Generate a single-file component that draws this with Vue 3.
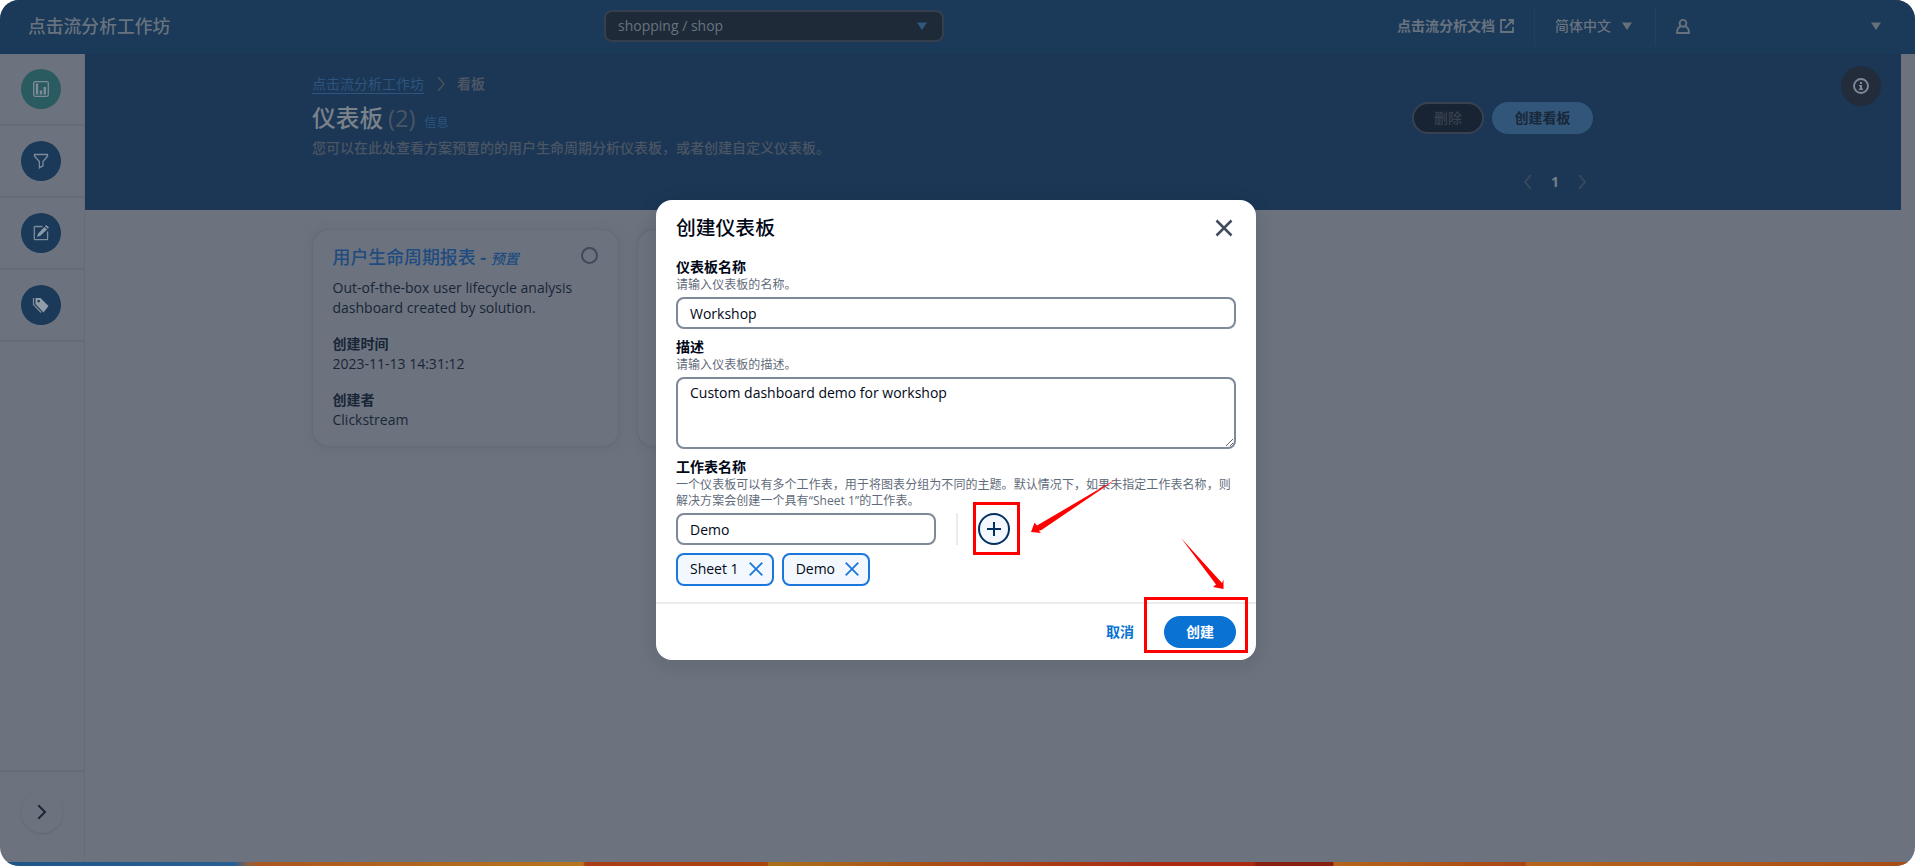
<script setup>
import { ref } from 'vue'
const tags = ['Sheet 1', 'Demo']
const description = ref('Custom dashboard demo for workshop')
</script>

<template>
  <div class="app">
    <header class="topbar">
      <span class="brand">点击流分析工作坊</span>
      <div class="project"><span>shopping / shop</span>
        <svg width="10" height="8" viewBox="0 0 10 8"><path d="M0 .5h10L5 8z" fill="#30587f" stroke="none" /></svg>
      </div>
      <div class="utils">
        <span class="doc">点击流分析文档</span>
        <svg class="ext" width="14" height="14" viewBox="0 0 14 14"><path d="M6 1H1v12h12V8M8.500 1H13v4.500M13 1L5 9" stroke-width="1.800" /></svg>
        <i class="sep s1"></i>
        <span class="lang">简体中文</span>
        <svg class="tri" width="10" height="8" viewBox="0 0 10 8"><path d="M0 .5h10L5 8z" fill="#66717c" stroke="none" /></svg>
        <i class="sep s2"></i>
        <svg class="user" width="14" height="15" viewBox="0 0 14 15"><circle cx="7" cy="4.300" r="3.400" stroke-width="1.900" /><path d="M4.800 7.200C2.500 8.200 1 10 1 14h12c0-4-1.500-5.800-3.800-6.800" stroke-width="1.900" /></svg>
        <svg class="tri last" width="10" height="8" viewBox="0 0 10 8"><path d="M0 .5h10L5 8z" fill="#66717c" stroke="none" /></svg>
      </div>
    </header>

    <div class="body">
      <nav class="side">
        <div class="item"><span class="dot green"><svg width="16" height="16" viewBox="0 0 16 16"><rect x=".7" y=".7" width="14.600" height="14.600" rx="1.500" /><path d="M4 2.500v11M8 9.500v4M11.800 6v7.500" stroke-width="2.400" /></svg></span></div>
        <div class="item"><span class="dot"><svg width="16" height="16" viewBox="0 0 16 16"><path d="M1.500 1.500h13v1.700L10 8.500v4.300l-3.600 2V8.500L1.500 3.200z" /></svg></span></div>
        <div class="item"><span class="dot"><svg width="16" height="16" viewBox="0 0 16 16"><path d="M9.500 1.500H2.200q-.9 0-.9.9v11.400q0 .9.900.9h11.500q.9 0 .9-.9V6.500" /><path d="M13 0l3 2.500-1.200 1.300-2.800-2.500zM11.300 2l2.800 2.600-6.800 6.200-3.300 1.200 1-3.300z" fill="#8c99a6" stroke="none" /></svg></span></div>
        <div class="item"><span class="dot"><svg width="18" height="16" viewBox="0 0 18 16"><path d="M3.500 1h5l8 8-5 6.500-8-8.500zM6.700 2.800a1.300 1.300 0 1 0 .01 0z" fill="#929ca8" fill-rule="evenodd" stroke="none" /><path d="M1.500 1v6.500l7.700 8" /></svg></span></div>
        <div class="expand"><span><svg width="10" height="16" viewBox="0 0 10 16"><path d="M1.300 1.200L8 8l-6.700 6.800" stroke="#1b2737" stroke-width="2" /></svg></span></div>
      </nav>

      <main class="main">
        <section class="hero">
          <div class="heroinner">
            <div class="crumbs"><a>点击流分析工作坊</a>
              <svg width="8" height="14" viewBox="0 0 8 14"><path d="M1 0l6 7-6 7" stroke="#46505e" stroke-width="1.600" /></svg><b>看板</b></div>
            <div class="titlerow">
              <h1>仪表板 <em>(2)</em><small>信息</small></h1>
              <div class="actions"><span class="btn del">删除</span><span class="btn create">创建看板</span></div>
            </div>
            <p>您可以在此处查看方案预置的的用户生命周期分析仪表板，或者创建自定义仪表板。</p>
            <div class="pager">
              <svg width="8" height="14" viewBox="0 0 8 14"><path d="M7 0L1 7l6 7" stroke="#3b4a5c" stroke-width="1.800" /></svg><b>1</b>
              <svg width="8" height="14" viewBox="0 0 8 14"><path d="M1 0l6 7-6 7" stroke="#3b4a5c" stroke-width="1.800" /></svg>
            </div>
          </div>
          <span class="info"><svg width="16" height="16" viewBox="0 0 16 16"><circle cx="8" cy="8" r="7" stroke="#808894" stroke-width="1.900" /><path d="M7 4h2v2H7zM6 7h3v3.500h1V12H6v-1.500h1V8.500H6z" fill="#808894" stroke="none" /></svg></span>
        </section>
        <section class="cards">
          <article class="card">
            <div class="cardhead"><h2>用户生命周期报表 <b>-</b> <i>预置</i></h2><span class="radio"></span></div>
            <p>Out-of-the-box user lifecycle analysis dashboard created by solution.</p>
            <dl><dt>创建时间</dt><dd>2023-11-13 14:31:12</dd></dl>
            <dl><dt>创建者</dt><dd>Clickstream</dd></dl>
          </article>
          <article class="card"></article>
        </section>
      </main>
    </div>
    <div class="strip"></div>

    <div class="modal">
      <div class="mhead"><h3>创建仪表板</h3><svg width="18" height="18" viewBox="0 0 18 18"><path d="M1.500 1.500l15 15M16.500 1.500l-15 15" stroke="#414d5c" stroke-width="2.500" /></svg></div>
      <div class="mbody">
        <label>仪表板名称</label><div class="hint">请输入仪表板的名称。</div>
        <div class="field">Workshop</div>
        <label>描述</label><div class="hint">请输入仪表板的描述。</div>
        <textarea v-model="description" class="field area" spellcheck="false"></textarea>
        <label>工作表名称</label><div class="hint">一个仪表板可以有多个工作表，用于将图表分组为不同的主题。默认情况下，如果未指定工作表名称，则解决方案会创建一个具有“Sheet 1”的工作表。</div>
        <div class="addrow"><div class="field short">Demo</div><i></i>
          <span class="plus"><svg width="14" height="14" viewBox="0 0 14 14"><path d="M7 0v14M0 7h14" stroke="#033160" stroke-width="2" /></svg></span></div>
        <div class="tags"><span v-for="t in tags" :key="t" class="tag">{{ t }}<svg width="14" height="14" viewBox="0 0 14 14"><path d="M.7.7l12.600 12.600M13.300.7L.7 13.300" stroke="#1a77dc" stroke-width="1.800" /></svg></span></div>
      </div>
      <div class="mfoot"><span class="cancel">取消</span><span class="ok">创建</span></div>
    </div>

    <div class="mark m1"></div>
    <div class="mark m2"></div>
    <svg class="arrows" width="220" height="130" viewBox="1020 470 220 130">
      <path d="M1118 478L1041.500 530 1038.800 530.800 1041 533 1031 532 1034.500 522.800 1037 525.500z" fill="#f00" stroke="none" />
      <path d="M1181 538L1222 583 1223.500 579.500 1223.500 589 1213 587 1216 584.500z" fill="#f00" stroke="none" />
    </svg>
  </div>
</template>

<style>
body { margin: 0; background: #fff; overflow: hidden; }
</style>

<style scoped>
* { box-sizing: border-box; }
svg { display: block; fill: none; stroke: #7e8b99; stroke-width: 1.300; flex: none; }
h1, h2, h3, p, dl, dd { margin: 0; }
.app { width: 1915px; height: 866px; display: flex; flex-direction: column; position: relative; overflow: hidden; border-radius: 19px; background: #6c737e; font: 14px/20px "Open Sans", "Noto Sans CJK SC", sans-serif; color: #182638; }
.topbar { height: 54px; flex: none; background: #1b3958; display: flex; align-items: flex-start; color: #68737f; }
.brand { width: 576px; margin-left: 28px; padding-top: 14px; font-size: 17.800px; line-height: 24px; font-weight: 500; }
.project { width: 340px; height: 32px; margin-top: 10px; border: 2px solid #353f4d; border-radius: 8px; background: #1f2a39; padding: 0 15px 0 12px; display: flex; align-items: center; justify-content: space-between; }
.utils { display: flex; align-items: center; margin-left: 453px; height: 54px; padding-bottom: 2px; }
.utils svg { stroke: #66717c; }
.doc { width: 98px; font-weight: 700; white-space: nowrap; }
.ext { margin-left: 5px; }
.sep { width: 1px; height: 39px; background: #24405e; }
.s1 { margin-left: 20px; }
.lang { margin-left: 20px; width: 57px; font-weight: 500; }
.tri { margin-left: 10px; }
.s2 { margin-left: 23px; }
.user { margin-left: 20px; }
.last { margin-left: 181px; }
.body { flex: 1; display: flex; min-height: 0; }
.side { width: 85px; border-right: 1px solid #666d79; display: flex; flex-direction: column; }
.item { height: 72px; border-bottom: 2px solid #666d79; padding: 15px 0 0 21px; flex: none; }
.dot { width: 40px; height: 40px; border-radius: 50%; background: #1b3958; display: flex; align-items: center; justify-content: center; }
.green { background: #2a5b60; }
.expand { margin-top: auto; height: 92px; border-top: 2px solid #666d79; padding: 19px 0 0 21px; }
.expand span { width: 42px; height: 42px; border-radius: 50%; display: flex; align-items: center; justify-content: center; box-shadow: 0 1px 2px #5f6676; }
.main { flex: 1; }
.hero { width: 1816px; height: 156px; background: #1b3755; position: relative; }
.heroinner { margin-left: 227px; width: 1281px; padding-top: 20px; color: #4b5563; }
.crumbs { display: flex; align-items: center; height: 20px; }
.crumbs a { color: #2d5580; border-bottom: 1px solid #2d5580; height: 20px; line-height: 20px; }
.crumbs svg { margin: 0 12px 0 13px; }
.titlerow { display: flex; justify-content: space-between; height: 44px; padding-top: 8px; }
h1 { font-size: 23.700px; line-height: 34px; color: #7a828b; font-weight: 500; display: flex; align-items: baseline; margin-top: -1px; }
h1 em { font-style: normal; font-weight: 400; color: #4b5563; margin-left: 5px; }
h1 small { font-size: 12px; color: #2d5580; font-weight: 400; margin-left: 9px; }
.actions { display: flex; gap: 8px; }
.btn { height: 32px; border-radius: 16px; display: flex; align-items: center; justify-content: center; font-weight: 500; }
.del { width: 72px; background: #182334; border: 2px solid #38414f; color: #38424f; }
.create { width: 101px; background: #32567a; color: #182839; font-weight: 700; }
.heroinner p { line-height: 20px; font-weight: 500; }
.pager { height: 34px; padding-top: 14px; display: flex; align-items: center; justify-content: flex-end; gap: 19px; margin-right: 7px; }
.pager b { color: #76808b; }
.info { position: absolute; right: 20px; top: 12px; width: 40px; height: 40px; border-radius: 50%; background: #222c3b; display: flex; align-items: center; justify-content: center; }
.cards { display: flex; gap: 20px; padding: 20px 0 0 228px; }
.card { width: 305px; height: 216px; border-radius: 16px; padding: 16px 20px 16px 19.500px; box-shadow: 0 0 1px 1px #656c79, 0 1px 8px 2px #666d7a; background: #6c737e; }
.cardhead { display: flex; justify-content: space-between; align-items: center; height: 22px; }
h2 { font-size: 17.900px; line-height: 22px; color: #204b7f; font-weight: 500; white-space: nowrap; padding-top: 1px; }
h2 i { font-size: 14px; }
.radio { width: 17px; height: 17px; border: 2px solid #3e4a59; border-radius: 50%; margin: -3px 0 0 0; }
.card p { margin-top: 10px; width: 262px; }
dl { margin-top: 16px; }
dt { font-weight: 700; }
.strip { height: 4px; flex: none; background: linear-gradient(90deg, #1e5687 0, #286092 235px, #8c6045 248px, #a95720 260px, #b6751e 583px, #a93d15 585px, #a9450f 767px, #aa701c 769px, #a94c16 950px, #a92c12 1150px, #a92c12 1253px, #87200f 1257px, #87200f 1333px, #b3661c 1334px, #a94615 1525px, #b3651d 1527px, #a94c16 1915px); }

.modal { position: absolute; left: 656px; top: 200px; width: 600px; height: 460px; border-radius: 16px; background: #fff; color: #000716; box-shadow: 0 4px 20px 1px rgba(0, 7, 22, .1); display: flex; flex-direction: column; }
.mhead { height: 57px; padding: 0 23px 2px 20px; display: flex; justify-content: space-between; align-items: center; }
h3 { font-size: 19.800px; line-height: 24px; font-weight: 500; }
.mbody { padding: 0 20px; flex: 1; }
label { display: block; font-weight: 700; line-height: 20px; }
.hint { font-size: 12px; line-height: 16px; color: #5f6b7a; padding-bottom: 4px; letter-spacing: .06px; margin-right: -4px; }
.field { display: block; height: 32px; border: 2px solid #7d8998; border-radius: 8px; padding: 4px 12px; margin-bottom: 8px; width: 100%; color: #000716; font: inherit; background: #fff; line-height: 22px; }
.area { height: 72px; line-height: 20px; padding: 4px 12px; resize: vertical; outline: none; }
.addrow { display: flex; }
.short { width: 260px; }
.addrow i { width: 2px; height: 32px; background: #e9ebed; margin: 0 20px; }
.plus { width: 32px; height: 32px; border-radius: 50%; border: 2px solid #033160; background: #f2f8fd; display: flex; align-items: center; justify-content: center; }
.tags { display: flex; gap: 8px; }
.tag { height: 33px; display: flex; align-items: center; border: 2px solid #1a77dc; border-radius: 8px; background: #f2f8fd; padding: 0 9px 1px 12px; gap: 10px; }
.mfoot { height: 58px; border-top: 2px solid #e9ebed; display: flex; justify-content: flex-end; align-items: center; padding-right: 20px; font-weight: 700; }
.cancel { color: #0972d3; margin-right: 30px; }
.ok { width: 72px; height: 32px; border-radius: 16px; background: #0972d3; color: #fff; display: flex; align-items: center; justify-content: center; }
.mark { position: absolute; border: 3px solid #f00; }
.m1 { left: 973px; top: 502px; width: 47px; height: 53px; }
.m2 { left: 1144px; top: 597px; width: 104px; height: 56px; }
.arrows { position: absolute; left: 1020px; top: 470px; }
</style>
